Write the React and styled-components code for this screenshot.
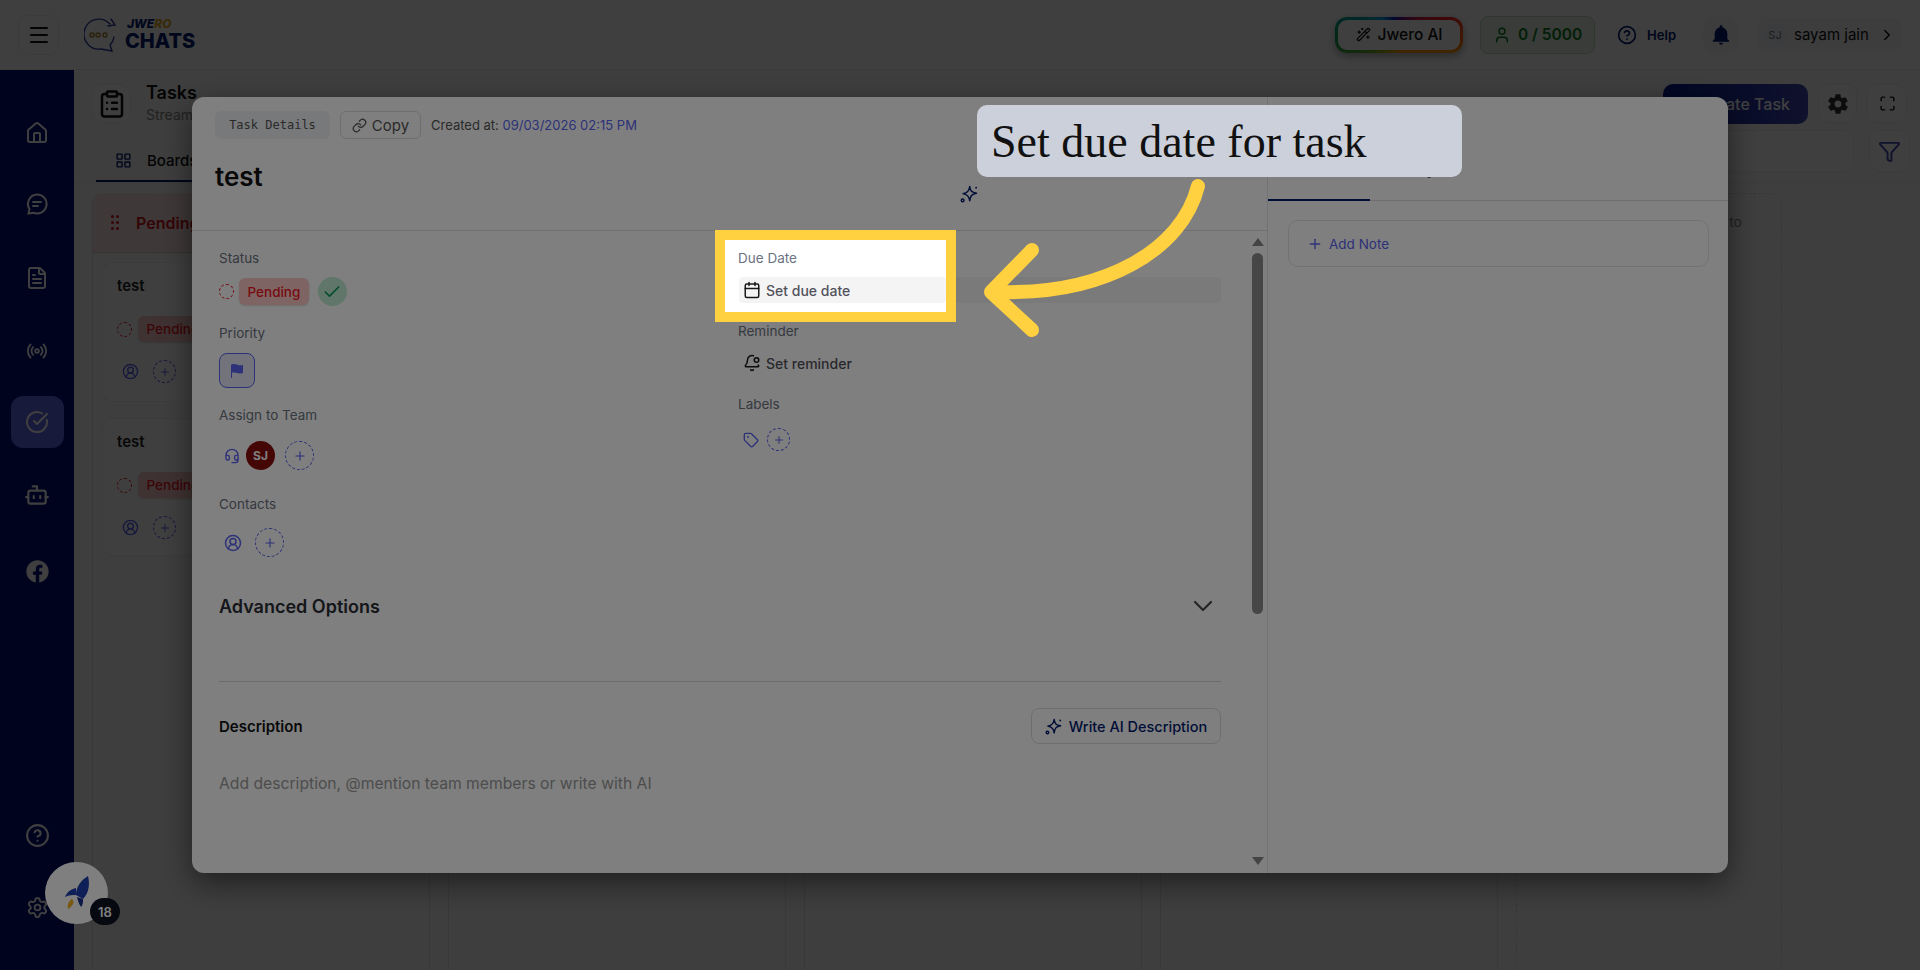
import styled, { createGlobalStyle } from "styled-components";
import {
  BellDot,
  Bot,
  Calendar,
  Check,
  ChevronDown,
  ChevronRight,
  CircleCheckBig,
  CircleHelp,
  CircleUserRound,
  ClipboardList,
  FileText,
  Funnel,
  Headset,
  House,
  LayoutGrid,
  Link,
  Maximize,
  Menu,
  Plus,
  Radio,
  Settings,
  Tag,
  User,
  WandSparkles,
} from "lucide-react";
import { FaFacebook } from "react-icons/fa";
import { IoMdSettings, IoMdNotifications } from "react-icons/io";
import { IoFlag } from "react-icons/io5";

const INDIGO = "#5a64f0";
const RED = "#f01522";

const GlobalStyle = createGlobalStyle`
  html, body {
    margin: 0;
    height: 970px;
    overflow: hidden;
    font-family: Inter, "Liberation Sans", sans-serif;
  }
  * {
    box-sizing: border-box;
  }
`;

const Page = styled.div`
  position: relative;
  width: 1920px;
  height: 970px;
  overflow: hidden;
  background: #fafafa;
`;

const TopBar = styled.header`
  height: 70px;
  display: flex;
  align-items: center;
  padding: 0 18px;
  background: #fff;
  border-bottom: 1px solid #eee;
`;

const MenuBox = styled.div`
  width: 41px;
  height: 40px;
  display: flex;
  align-items: center;
  justify-content: center;
  border: 1px solid #eee;
  border-radius: 10px;
  color: #111;
`;

const Logo = styled.div`
  display: flex;
  align-items: center;
  gap: 7px;
  margin-left: 25px;
`;

const LogoText = styled.div`
  display: flex;
  flex-direction: column;
  color: #001a6e;
`;

const LogoTop = styled.span`
  font-size: 12px;
  line-height: 13px;
  font-weight: 800;
  font-style: italic;
  margin-left: 2px;
  color: #001a6e;

  b {
    color: #e6a817;
    font-weight: 800;
  }
`;

const LogoBottom = styled.span`
  font-size: 20px;
  line-height: 22px;
  font-weight: 800;
`;

const TopRight = styled.div`
  margin-left: auto;
  display: flex;
  align-items: center;
`;

const AiButton = styled.div`
  width: 128px;
  height: 36px;
  display: flex;
  align-items: center;
  justify-content: center;
  gap: 7px;
  border: 3px solid transparent;
  border-radius: 12px;
  background:
    linear-gradient(#fff, #fff) padding-box,
    conic-gradient(from 0deg, #4a0fa0, #ff2020 20%, #ff9800 30%, #ff9800 50%, #a0b000 62%, #00a060 75%, #00a0e0 87%, #0020c0 95%, #4a0fa0) border-box;
  box-shadow: 0 3px 8px rgba(0, 0, 0, 0.35);
  font-size: 15.5px;
  font-weight: 500;
  color: #111;
`;

const CreditBox = styled.div`
  width: 115px;
  height: 38px;
  margin-left: 17px;
  display: flex;
  align-items: center;
  justify-content: center;
  gap: 7px;
  background: #e4f3e4;
  border: 1px solid #bcdcbc;
  border-radius: 8px;
  color: #0d7a1f;
  font-size: 15.5px;
  font-weight: 600;
`;

const HelpLink = styled.div`
  display: flex;
  align-items: center;
  gap: 10px;
  margin-left: 22px;
  color: #001a6e;
  font-size: 13px;
  font-weight: 600;
`;

const BellBox = styled.div`
  width: 35px;
  height: 36px;
  margin-left: 27px;
  display: flex;
  align-items: center;
  justify-content: center;
  background: #f7f7f8;
  border-radius: 10px;
  color: #001a6e;
`;

const UserBox = styled.div`
  width: 145px;
  height: 34px;
  margin-left: 19px;
  display: flex;
  align-items: center;
  padding: 0 6px 0 6px;
  background: #f7f7f8;
  border-radius: 10px;
  color: #111;
  font-size: 15px;
`;

const UserAvatar = styled.span`
  width: 24px;
  height: 24px;
  display: flex;
  align-items: center;
  justify-content: center;
  border-radius: 50%;
  background: #eef0f4;
  color: #777;
  font-size: 11px;
  margin-right: 7px;
`;

const UserArrow = styled.span`
  margin-left: auto;
  display: flex;
`;

const Body = styled.div`
  display: flex;
  height: 900px;
`;

const SideBar = styled.nav`
  width: 74px;
  flex: none;
  display: flex;
  flex-direction: column;
  align-items: center;
  background: #000e78;
  padding: 37px 0 17px;
`;

const SideItem = styled.div`
  width: 53px;
  height: 52px;
  display: flex;
  align-items: center;
  justify-content: center;
  margin-bottom: ${(p) => p.$mb || 20}px;
  border-radius: 12px;
  background: ${(p) => (p.$active ? "#6068f0" : "transparent")};
  color: #fff;
`;

const SideSpacer = styled.div`
  flex: 1;
`;

const Content = styled.main`
  flex: 1;
  min-width: 0;
  display: flex;
  flex-direction: column;
  background: #fafafa;
`;

const HeadRow = styled.div`
  display: flex;
  align-items: center;
  height: 39px;
  margin: 14px 13px 0 18px;
`;

const IconBox = styled.div`
  width: ${(p) => p.$w || 39}px;
  height: ${(p) => p.$h || 39}px;
  flex: none;
  display: flex;
  align-items: center;
  justify-content: center;
  background: #fff;
  border: 1px solid #eee;
  border-radius: 10px;
  color: ${(p) => p.$color || "#111"};
  margin-left: ${(p) => p.$ml || 0}px;
`;

const HeadTitle = styled.div`
  margin-left: 15px;
  display: flex;
  flex-direction: column;
`;

const TitleText = styled.span`
  font-size: 18px;
  line-height: 22px;
  font-weight: 600;
  color: #111;
`;

const SubText = styled.span`
  font-size: 14px;
  line-height: 21px;
  color: #888;
`;

const CreateButton = styled.div`
  width: 145px;
  height: 40px;
  margin-left: auto;
  display: flex;
  align-items: center;
  justify-content: flex-end;
  padding-right: 18px;
  border-radius: 10px;
  background: linear-gradient(90deg, #001a8c, #3f47b5);
  color: #fff;
  font-size: 16px;
  font-weight: 500;
`;

const TabRow = styled.div`
  height: 60px;
  display: flex;
  align-items: flex-end;
  padding: 0 13px 0 22px;
  border-bottom: 1px solid #eee;
`;

const BoardTab = styled.div`
  width: 200px;
  height: 52px;
  display: flex;
  align-items: center;
  gap: 15px;
  padding: 10px 0 0 19px;
  border-bottom: 2px solid #001a6e;
  color: #111;
  font-size: 15px;
  font-weight: 500;
`;

const SearchBox = styled.div`
  width: 400px;
  height: 42px;
  margin: 0 15px 10px auto;
  background: #fff;
  border: 1px solid #eee;
  border-radius: 10px;
`;

const FilterSlot = styled.div`
  margin-bottom: 10px;
  margin-right: -3px;
`;

const Board = styled.div`
  flex: 1;
  display: flex;
  gap: 18px;
  padding: 10px 0 0 18px;
`;

const Column = styled.section`
  width: 338px;
  flex: none;
  border-right: 1px solid #e4e4e6;
  border-left: 1px solid #e4e4e6;
  border-radius: 10px 10px 0 0;
`;

const DropColumn = styled.section`
  width: 266px;
  flex: none;
  padding: 19px 39px 0 0;
  text-align: right;
  border: 1px dashed #ddd;
  border-bottom: none;
  border-radius: 12px 12px 0 0;
  font-size: 14px;
  color: #888;
`;

const ColumnHead = styled.div`
  height: 59px;
  display: flex;
  align-items: center;
  gap: 17px;
  padding-left: 18px;
  background: #fde3e3;
  border-radius: 10px 10px 0 0;
  box-shadow: 0 1px 2px rgba(0, 0, 0, 0.2);
  color: #d0121b;
  font-size: 16px;
  font-weight: 600;
`;

const DragDots = styled.span`
  width: 8px;
  display: grid;
  grid-template-columns: 3px 3px;
  gap: 3px 2px;

  i {
    width: 3px;
    height: 3px;
    background: #d0121b;
    border-radius: 50%;
  }
`;

const Card = styled.article`
  height: ${(p) => p.$h}px;
  margin: ${(p) => p.$mt}px 8px 0 9px;
  padding: 14px 14px;
  background: #fff;
  border: 1px solid #eee;
  border-radius: 10px;
`;

const CardTitle = styled.div`
  font-size: 15px;
  line-height: 18px;
  font-weight: 600;
  color: #222;
`;

const CardRow = styled.div`
  display: flex;
  align-items: center;
  gap: ${(p) => p.$gap || 6}px;
  margin-top: ${(p) => p.$mt}px;
  padding-left: ${(p) => p.$pl || 0}px;
`;

const StatusRing = styled.span`
  width: ${(p) => p.$size}px;
  height: ${(p) => p.$size}px;
  flex: none;
  border: 1.5px dashed ${RED};
  border-radius: 50%;
`;

const PendingPill = styled.span`
  height: ${(p) => p.$h}px;
  display: flex;
  align-items: center;
  padding: 0 8.5px;
  background: #ffc9c9;
  border-radius: 6px;
  box-shadow: 0 1px 2px rgba(0, 0, 0, 0.15);
  color: ${RED};
  font-size: 13.5px;
  font-weight: 500;
`;

const AddCircle = styled.span`
  width: ${(p) => p.$size}px;
  height: ${(p) => p.$size}px;
  flex: none;
  display: flex;
  align-items: center;
  justify-content: center;
  border: 1px dashed ${INDIGO};
  border-radius: 50%;
  color: ${INDIGO};
`;

const Indigo = styled.span`
  display: flex;
  color: ${INDIGO};
`;

const RocketButton = styled.div`
  position: absolute;
  left: 45px;
  top: 862px;
  width: 63px;
  height: 62px;
  display: flex;
  align-items: center;
  justify-content: center;
  background: #fff;
  border-radius: 50%;
`;

const RocketBadge = styled.span`
  position: absolute;
  left: 45px;
  top: 36px;
  width: 30px;
  height: 27px;
  display: flex;
  align-items: center;
  justify-content: center;
  background: #0c1220;
  border-radius: 14px;
  color: #fff;
  font-size: 13px;
  font-weight: 600;
`;

const Backdrop = styled.div`
  position: absolute;
  inset: 0;
  background: rgba(0, 0, 0, ${(p) => p.$alpha});
`;

const Modal = styled.div`
  position: absolute;
  left: 192px;
  top: 97px;
  width: 1536px;
  height: 776px;
  display: flex;
  background: #fff;
  border-radius: 12px;
  box-shadow: 0 10px 30px rgba(0, 0, 0, 0.5);
  overflow: hidden;
`;

const DetailPane = styled.div`
  position: relative;
  width: 1076px;
  flex: none;
  border-right: 1px solid #e5e5e5;
`;

const DetailHead = styled.div`
  height: 134px;
  padding: 14px 23px 0;
  border-bottom: 1px solid #e0e0e0;
`;

const ChipRow = styled.div`
  display: flex;
  align-items: center;
  gap: 10px;
`;

const MonoChip = styled.span`
  width: 115px;
  height: 28px;
  display: flex;
  align-items: center;
  justify-content: center;
  background: #f0f2f5;
  border-radius: 6px;
  font-family: "DejaVu Sans Mono", "Liberation Mono", monospace;
  font-size: 12px;
  color: #555;
`;

const CopyButton = styled.span`
  width: 81px;
  height: 28px;
  display: flex;
  align-items: center;
  justify-content: center;
  gap: 5px;
  border: 1px solid #ddd;
  border-radius: 6px;
  font-size: 15px;
  color: #555;
`;

const CreatedAt = styled.span`
  font-size: 13px;
  color: #555;

  b {
    font-weight: 400;
    color: ${INDIGO};
  }
`;

const TitleRow = styled.div`
  display: flex;
  align-items: flex-start;
  margin-top: 22px;
`;

const TaskTitle = styled.h1`
  width: 745px;
  margin: 0;
  font-size: 26px;
  line-height: 32px;
  font-weight: 600;
  color: #111;
`;

const SparkleSlot = styled.span`
  display: flex;
  margin-top: 24px;
  color: #001a6e;
`;

const DetailBody = styled.div`
  padding: 18px 0 0 27px;
  width: 1029px;
`;

const FieldGrid = styled.div`
  display: grid;
  grid-template-columns: 519px 483px;
`;

const FieldLabel = styled.div`
  min-height: 18px;
  font-size: 13.5px;
  line-height: 18px;
  color: #6b7280;
  margin-top: ${(p) => p.$mt || 0}px;
`;

const FieldRow = styled.div`
  display: flex;
  align-items: center;
  gap: ${(p) => p.$gap || 0}px;
  height: ${(p) => p.$h}px;
  margin-top: ${(p) => p.$mt}px;
  padding-left: ${(p) => p.$pl || 0}px;
`;

const DoneCircle = styled.span`
  width: 29px;
  height: 29px;
  margin-left: 4px;
  display: flex;
  align-items: center;
  justify-content: center;
  background: #c2ecd6;
  border-radius: 50%;
  color: #0a9a55;
`;

const FlagBox = styled.span`
  width: 36px;
  height: 35px;
  display: flex;
  align-items: center;
  justify-content: center;
  background: #e4e7f6;
  border: 1px solid ${INDIGO};
  border-radius: 8px;
  color: ${INDIGO};
`;

const TeamAvatar = styled.span`
  width: 29px;
  height: 29px;
  display: flex;
  align-items: center;
  justify-content: center;
  background: #8a0c0c;
  border-radius: 50%;
  color: #fff;
  font-size: 12px;
  font-weight: 700;
  margin-right: 4px;
`;

const ActionRow = styled.div`
  height: 26px;
  display: flex;
  align-items: center;
  gap: 5px;
  margin-top: 10px;
  margin-left: 1px;
  padding-left: 4px;
  border-radius: 4px;
  background: ${(p) => (p.$filled ? "#f4f4f5" : "transparent")};
  color: #52525b;
  font-size: 14px;
  font-weight: 500;

  svg {
    color: #18181b;
    flex: none;
  }
`;

const AdvancedRow = styled.div`
  display: flex;
  align-items: center;
  justify-content: space-between;
  height: 24px;
  margin-top: 37px;
  padding-right: 2px;
  font-size: 18px;
  font-weight: 600;
  color: #2b2d33;

  svg {
    color: #4a4a4a;
  }
`;

const Rule = styled.div`
  height: 1px;
  width: 1002px;
  margin-top: 63px;
  background: #d8d8d8;
`;

const DescriptionRow = styled.div`
  display: flex;
  align-items: center;
  justify-content: space-between;
  width: 1002px;
  margin-top: 26px;
  font-size: 15px;
  font-weight: 600;
  color: #111;
`;

const WriteButton = styled.span`
  width: 190px;
  height: 36px;
  display: flex;
  align-items: center;
  justify-content: center;
  gap: 7px;
  border: 1px solid #ddd;
  border-radius: 8px;
  font-size: 14.5px;
  font-weight: 500;
  color: #001a6e;
`;

const Placeholder = styled.div`
  margin-top: 31px;
  font-size: 15.7px;
  line-height: 18px;
  color: #9a9a9a;
`;

const ScrollTrack = styled.div`
  position: absolute;
  top: 134px;
  right: 3px;
  bottom: 0;
  width: 13px;
  display: flex;
  flex-direction: column;
  align-items: center;
`;

const ScrollArrow = styled.span`
  flex: none;
  margin-top: ${(p) => p.$mt}px;
  border-left: 6px solid transparent;
  border-right: 6px solid transparent;
  ${(p) => (p.$down ? "border-top: 8px solid #888;" : "border-bottom: 8px solid #888;")}
`;

const ScrollThumb = styled.span`
  width: 11px;
  height: 361px;
  margin-top: 7px;
  border-radius: 6px;
  background: #8c8c8c;
`;

const NotesPane = styled.div`
  flex: 1;
`;

const NoteTabs = styled.div`
  height: 104px;
  display: flex;
  align-items: flex-end;
  border-bottom: 1px solid #ddd;
  font-size: 14px;
  font-weight: 500;
  color: #555;
`;

const NoteTab = styled.span`
  width: 102px;
  height: 46px;
  padding-top: 6px;
  text-align: center;
  margin-bottom: -1px;
  border-bottom: 2px solid ${(p) => (p.$active ? "#001a6e" : "transparent")};
`;

const AddNote = styled.div`
  height: 47px;
  margin: 19px 19px 0 20px;
  display: flex;
  align-items: center;
  gap: 6px;
  padding-left: 18px;
  border: 1px solid #e4e4e4;
  border-radius: 10px;
  color: ${INDIGO};
  font-size: 13.5px;
`;

const Highlight = styled.div`
  position: absolute;
  left: 715px;
  top: 230px;
  width: 241px;
  height: 92px;
  padding: 9px 0 0 13px;
  background: #fff;
  border: 10px solid #ffd040;
  overflow: hidden;
`;

const Callout = styled.div`
  position: absolute;
  left: 977px;
  top: 105px;
  width: 485px;
  height: 72px;
  display: flex;
  align-items: center;
  padding-left: 14px;
  background: #cbd0da;
  border-radius: 10px;
  font-family: "Liberation Serif", serif;
  font-size: 46px;
  color: #111;
`;

const ArrowLayer = styled.svg`
  position: absolute;
  left: 0;
  top: 0;
`;

function Sparkle({ size = 18 }) {
  return (
    <svg width={size} height={size} viewBox="0 0 24 24" fill="none" stroke="currentColor" strokeWidth="2" strokeLinejoin="round">
      <path d="M13 2 C13.6 8 15.5 10 22 11 C15.5 12 13.8 14.5 13 21 C12.2 15 10 12.5 4 11.5 C10 10.5 12.4 8 13 2 Z" />
      <circle cx="21.5" cy="3.5" r="1.3" fill="currentColor" stroke="none" />
      <circle cx="3.5" cy="20.5" r="1.8" />
    </svg>
  );
}

function ChatIcon() {
  return (
    <svg width="24" height="24" viewBox="0 0 24 24" fill="none" stroke="currentColor" strokeWidth="2" strokeLinecap="round">
      <path d="M12 2.5a9.5 9.5 0 1 1-3.5 18.3L3.5 21.5l1-4.4A9.5 9.5 0 0 1 12 2.5Z" />
      <path d="M8 10h8M8 14h5" />
    </svg>
  );
}

function LogoMark() {
  return (
    <svg width="34" height="34" viewBox="0 0 34 34" fill="none" stroke="#2a3a9c" strokeWidth="1.4" strokeLinecap="round">
      <path d="M26 6 A15 15 0 1 0 17 31 L28 33 L26 27 A14 14 0 0 0 30 19" />
      <path d="M27 1 L31 7 L24 8" />
      <circle cx="8" cy="17" r="2" stroke="#a8842a" />
      <circle cx="14" cy="17" r="2" stroke="#a8842a" />
      <circle cx="21" cy="17" r="2" stroke="#a8842a" />
    </svg>
  );
}

function RocketIcon() {
  return (
    <svg width="30" height="36" viewBox="0 0 30 36">
      <path d="M6 34 C5 29 7 26 10 24 C13 27 11 31 6 34 Z" fill="#f2b01e" />
      <path d="M26 1 C28 9 27 18 21 24 L14 20 C14 12 19 5 26 1 Z" fill="#1f3fae" />
      <path d="M14 13 C9 14 5 17 3 22 C7 20 11 20 14 20 Z" fill="#1f3fae" />
      <path d="M21 24 C21 27 21 30 19 32 C17 29 16 26 15 22 Z" fill="#162f8a" />
    </svg>
  );
}

function TaskCard({ height, top }) {
  return (
    <Card $h={height} $mt={top}>
      <CardTitle>test</CardTitle>
      <CardRow $mt={21} $gap={6}>
        <StatusRing $size={15} />
        <PendingPill $h={26}>Pending</PendingPill>
      </CardRow>
      <CardRow $mt={18} $gap={14} $pl={5}>
        <Indigo>
          <CircleUserRound size={17} />
        </Indigo>
        <AddCircle $size={23}>
          <Plus size={12} />
        </AddCircle>
      </CardRow>
    </Card>
  );
}

export default function App() {
  return (
    <Page>
      <GlobalStyle />
      <TopBar>
        <MenuBox>
          <Menu size={24} />
        </MenuBox>
        <Logo>
          <LogoMark />
          <LogoText>
            <LogoTop>
              JWE<b>RO</b>
            </LogoTop>
            <LogoBottom>CHATS</LogoBottom>
          </LogoText>
        </Logo>
        <TopRight>
          <AiButton>
            <WandSparkles size={15} />
            Jwero AI
          </AiButton>
          <CreditBox>
            <User size={18} />0 / 5000
          </CreditBox>
          <HelpLink>
            <CircleHelp size={20} />
            Help
          </HelpLink>
          <BellBox>
            <IoMdNotifications size={24} />
          </BellBox>
          <UserBox>
            <UserAvatar>SJ</UserAvatar>
            sayam jain
            <UserArrow>
              <ChevronRight size={18} />
            </UserArrow>
          </UserBox>
        </TopRight>
      </TopBar>
      <Body>
        <SideBar>
          <SideItem $mb={19}>
            <House size={24} />
          </SideItem>
          <SideItem $mb={22}>
            <ChatIcon />
          </SideItem>
          <SideItem $mb={21}>
            <FileText size={24} />
          </SideItem>
          <SideItem $mb={19}>
            <Radio size={22} />
          </SideItem>
          <SideItem $active $mb={21}>
            <CircleCheckBig size={24} />
          </SideItem>
          <SideItem $mb={24}>
            <Bot size={26} />
          </SideItem>
          <SideItem>
            <FaFacebook size={23} />
          </SideItem>
          <SideSpacer />
          <SideItem $mb={20}>
            <CircleHelp size={25} />
          </SideItem>
          <SideItem $mb={0}>
            <Settings size={23} />
          </SideItem>
        </SideBar>
        <Content>
          <HeadRow>
            <IconBox>
              <ClipboardList size={30} />
            </IconBox>
            <HeadTitle>
              <TitleText>Tasks</TitleText>
              <SubText>Stream</SubText>
            </HeadTitle>
            <CreateButton>Create Task</CreateButton>
            <IconBox $ml={10}>
              <IoMdSettings size={24} color="#333" />
            </IconBox>
            <IconBox $ml={10} $w={40}>
              <Maximize size={17} />
            </IconBox>
          </HeadRow>
          <TabRow>
            <BoardTab>
              <LayoutGrid size={17} color="#001a6e" />
              Boards
            </BoardTab>
            <SearchBox />
            <FilterSlot>
              <IconBox $w={41} $h={42} $color="#3f47b5">
                <Funnel size={23} />
              </IconBox>
            </FilterSlot>
          </TabRow>
          <Board>
            <Column>
              <ColumnHead>
                <DragDots>
                  <i /><i /><i /><i /><i /><i />
                </DragDots>
                Pending
              </ColumnHead>
              <TaskCard height={140} top={10} />
              <TaskCard height={138} top={16} />
            </Column>
            <Column />
            <Column />
            <Column />
            <DropColumn>Drag tasks here to</DropColumn>
          </Board>
        </Content>
      </Body>
      <Backdrop $alpha={0.5} />
      <RocketButton>
        <RocketIcon />
        <RocketBadge>18</RocketBadge>
      </RocketButton>
      <Modal>
        <DetailPane>
          <DetailHead>
            <ChipRow>
              <MonoChip>Task Details</MonoChip>
              <CopyButton>
                <Link size={15} />
                Copy
              </CopyButton>
              <CreatedAt>
                Created at: <b>09/03/2026 02:15 PM</b>
              </CreatedAt>
            </ChipRow>
            <TitleRow>
              <TaskTitle>test</TaskTitle>
              <SparkleSlot>
                <Sparkle />
              </SparkleSlot>
            </TitleRow>
          </DetailHead>
          <DetailBody>
            <FieldGrid>
              <div>
                <FieldLabel>Status</FieldLabel>
                <FieldRow $h={29} $mt={10} $gap={5}>
                  <StatusRing $size={15} />
                  <PendingPill $h={27}>Pending</PendingPill>
                  <DoneCircle>
                    <Check size={20} />
                  </DoneCircle>
                </FieldRow>
                <FieldLabel $mt={18}>Priority</FieldLabel>
                <FieldRow $h={35} $mt={11}>
                  <FlagBox>
                    <IoFlag size={16} />
                  </FlagBox>
                </FieldRow>
                <FieldLabel $mt={18}>Assign to Team</FieldLabel>
                <FieldRow $h={29} $mt={17} $gap={6} $pl={5}>
                  <Indigo>
                    <Headset size={16} />
                  </Indigo>
                  <TeamAvatar>SJ</TeamAvatar>
                  <AddCircle $size={29}>
                    <Plus size={14} />
                  </AddCircle>
                </FieldRow>
                <FieldLabel $mt={25}>Contacts</FieldLabel>
                <FieldRow $h={29} $mt={15} $gap={13} $pl={5}>
                  <Indigo>
                    <CircleUserRound size={18} />
                  </Indigo>
                  <AddCircle $size={29}>
                    <Plus size={14} />
                  </AddCircle>
                </FieldRow>
              </div>
              <div>
                <FieldLabel />
                <ActionRow $filled />
                <FieldLabel $mt={19}>Reminder</FieldLabel>
                <ActionRow>
                  <BellDot size={18} />
                  Set reminder
                </ActionRow>
                <FieldLabel $mt={19}>Labels</FieldLabel>
                <FieldRow $h={23} $mt={15} $gap={8} $pl={5}>
                  <Indigo>
                    <Tag size={16} />
                  </Indigo>
                  <AddCircle $size={23}>
                    <Plus size={12} />
                  </AddCircle>
                </FieldRow>
              </div>
            </FieldGrid>
            <AdvancedRow>
              Advanced Options
              <ChevronDown size={32} strokeWidth={1.6} />
            </AdvancedRow>
            <Rule />
            <DescriptionRow>
              Description
              <WriteButton>
                <Sparkle size={17} />
                Write AI Description
              </WriteButton>
            </DescriptionRow>
            <Placeholder>Add description, @mention team members or write with AI</Placeholder>
          </DetailBody>
          <ScrollTrack>
            <ScrollArrow $mt={7} />
            <ScrollThumb />
            <ScrollArrow $down $mt={243} />
          </ScrollTrack>
        </DetailPane>
        <NotesPane>
          <NoteTabs>
            <NoteTab $active>Notes (0)</NoteTab>
            <NoteTab>Activity (0)</NoteTab>
          </NoteTabs>
          <AddNote>
            <Plus size={16} />
            Add Note
          </AddNote>
        </NotesPane>
      </Modal>
      <Backdrop $alpha={0.5} />
      <Highlight>
        <FieldLabel>Due Date</FieldLabel>
        <ActionRow $filled>
          <Calendar size={18} />
          Set due date
        </ActionRow>
      </Highlight>
      <Callout>Set due date for task</Callout>
      <ArrowLayer width="1920" height="970" fill="none" stroke="#ffd040" strokeWidth="14" strokeLinecap="round" strokeLinejoin="round">
        <path d="M1198 186 C1182 250 1105 295 998 292" />
        <path d="M1032 250 L991 292 L1032 330" />
      </ArrowLayer>
    </Page>
  );
}
